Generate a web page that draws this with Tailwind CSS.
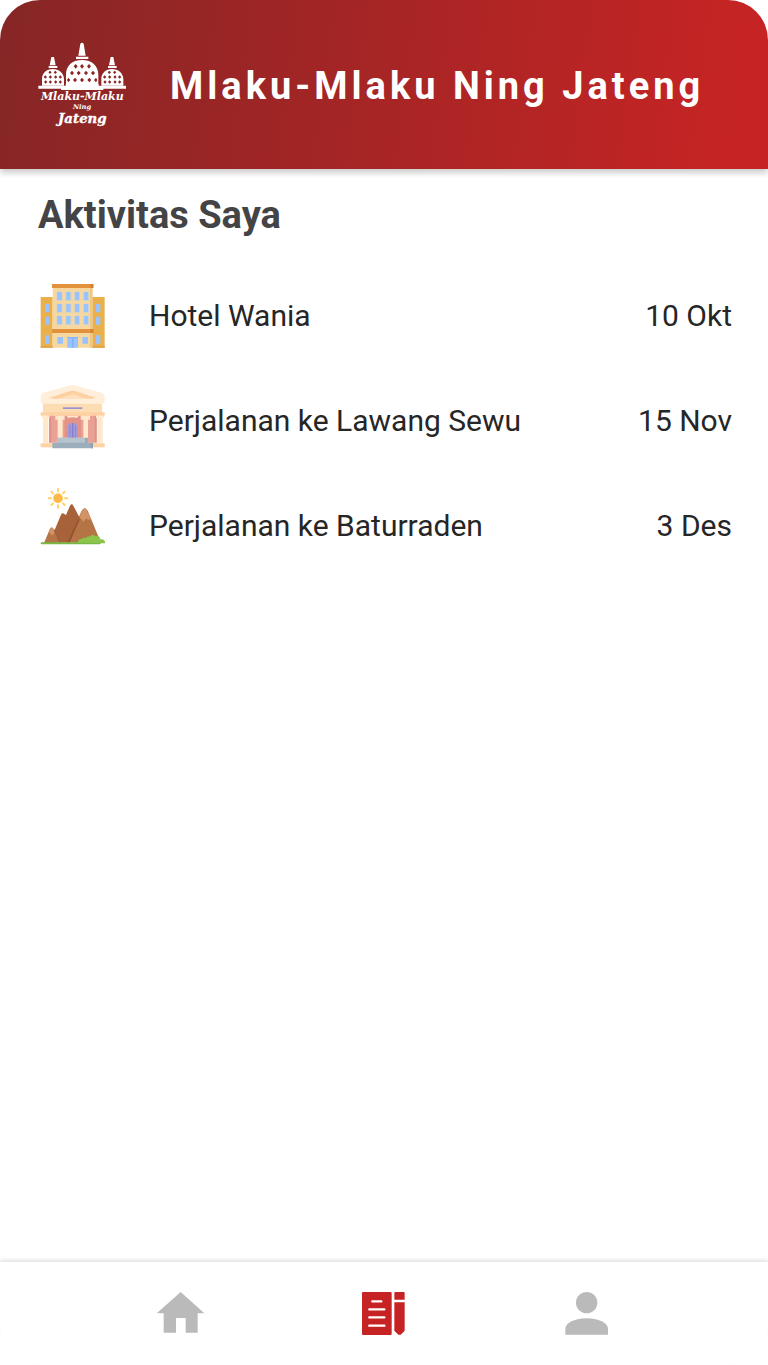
<!DOCTYPE html>
<html lang="id">
<head>
<meta charset="utf-8">
<meta name="viewport" content="width=device-width, initial-scale=1">
<title>Mlaku-Mlaku Ning Jateng</title>
<script src="https://cdn.jsdelivr.net/npm/@tailwindcss/browser@4"></script>
</head>
<body class="bg-white font-[Roboto,sans-serif] text-[#262626]">
<div class="flex min-h-screen flex-col overflow-hidden rounded-[40px] bg-white">
  <header class="flex h-[169px] shrink-0 items-center gap-[38px] bg-[linear-gradient(98deg,#862626_0%,#c62424_95%)] pl-[34px] shadow-[0_4px_6px_rgba(0,0,0,0.2)]">
    <svg class="h-[100px] w-[98px] shrink-0" viewBox="12 0 294 300" role="img" aria-label="Logo Mlaku-Mlaku Ning Jateng">
      <defs>
        <g id="s">
          <path d="M64 66h8l5 25h-18zM56 93h26v6H56zM36 152v-20c0-18 14-30 32-30s34 12 34 30v20z" fill="#fff"/>
          <path d="M60 107l5 5-5 5-5-5zM76 107l5 5-5 5-5-5zM46 121l5 5-5 5-5-5zM61 121l5 5-5 5-5-5zM77 121l5 5-5 5-5-5zM91 121l5 5-5 5-5-5zM47 136l5 5-5 5-5-5zM61 136l5 5-5 5-5-5zM77 136l5 5-5 5-5-5zM91 136l5 5-5 5-5-5z" fill="#8c2626"/>
        </g>
      </defs>
      <use href="#s"/><use href="#s" x="178"/>
      <path d="M151 26q5-6 10 0l6 36h-22zM138 65h37v7h-37zM108 154v-35c0-26 18-44 48-44s49 18 49 44v35z" fill="#fff"/>
      <path d="M25 152h82v-4h99v4h82v9h-68v4H93v-4H25z" fill="#fff"/>
      <g fill="#8c2626">
        <path d="M137 87l6 7-6 7-6-7zM156 87l6 7-6 7-6-7zM177 87l6 7-6 7-6-7z"/>
        <path d="M126 107l6 7-6 7-6-7zM146 107l6 7-6 7-6-7zM168 107l6 7-6 7-6-7zM189 107l6 7-6 7-6-7z"/>
        <path d="M115 128l6 7-6 7-4-7zM135 128l6 7-6 7-6-7zM156 128l6 7-6 7-6-7zM178 128l6 7-6 7-6-7zM198 128l4 7-4 7-6-7z"/>
      </g>
      <g fill="#fff" text-anchor="middle" font-family="'DejaVu Serif', serif" font-style="italic" font-weight="bold">
        <text x="157" y="194" font-size="33">Mlaku-Mlaku</text>
        <text x="156" y="222" font-size="20">Ning</text>
        <text x="157" y="264" font-size="40" stroke="#fff" stroke-width="1">Jateng</text>
      </g>
    </svg>
    <h1 class="whitespace-nowrap pt-[2px] text-[38px] leading-[48px] font-bold tracking-[4px] text-white">Mlaku-Mlaku Ning Jateng</h1>
  </header>

  <main class="flex-1 px-[38px] pt-[22px]">
    <h2 class="text-[38px] leading-[48px] font-bold text-[#444446]">Aktivitas Saya</h2>
    <ul class="mt-6 pl-[2px] text-[30px] leading-10">
      <li class="flex h-[105px] items-center gap-[43px]">
        <svg class="h-[66px] w-[66px] shrink-0" viewBox="30 24 198 198" aria-hidden="true">
          <path fill="#e9b04c" d="M32 66h36v152H32zM187 66h37v152h-37z"/>
          <path fill="#f6d7a0" d="M68 38h114v180H68z"/>
          <path fill="#f0c77d" d="M180 38h8v180h-8z"/>
          <path fill="#e2913d" d="M66 27h124v12H66zM66 162h124v12H66z"/>
          <path fill="#d67f32" d="M182 27h8v12h-8zM182 162h8v12h-8z"/>
          <path fill="#c8d3d2" d="M80 50h17v27H80zM107 50h17v27h-17zM133 50h17v27h-17zM160 50h17v27h-17zM80 86h17v27H80zM107 86h17v27h-17zM133 86h17v27h-17zM160 86h17v27h-17zM80 122h17v28H80zM107 122h17v28h-17zM133 122h17v28h-17zM160 122h17v28h-17z"/>
          <path fill="#98c3ff" d="M82 51h13v24H82zM109 51h12v24h-12zM135 51h12v24h-12zM162 51h12v24h-12zM82 87h13v24H82zM109 87h12v24h-12zM135 87h12v24h-12zM162 87h12v24h-12zM82 123h13v24H82zM109 123h12v24h-12zM135 123h12v24h-12zM162 123h12v24h-12zM45 87h12v25H45zM45 125h12v24H45zM45 181h12v25H45zM198 87h13v25h-13zM198 125h13v24h-13zM198 181h13v25h-13zM82 186h17v20H82zM157 186h17v20h-17zM112 186h32v32h-32z"/>
          <path fill="#83b3f8" d="M126 189h5v29h-5zM112 186h32v3h-32z"/>
          <path fill="#e2a24a" d="M32 213h36v5H32zM187 213h37v5h-37z"/>
        </svg>
        <span class="flex-1">Hotel Wania</span><time datetime="10-10" class="-mr-[2px]">10 Okt</time>
      </li>
      <li class="flex h-[105px] items-center gap-[43px]">
        <svg class="h-[78px] w-[66px] shrink-0" viewBox="30 19 198 234" aria-hidden="true">
          <path fill="#fcdcb2" d="M39 80h177v32H39z"/>
          <path fill="#ffefda" d="M32 62q0-8 9-11l73-20q14-5 28 0l73 20q9 3 9 11v16q0 6-6 6H38q-6 0-6-6z"/>
          <path fill="#fdd0a0" d="M58 66l63-20q7-2 14 0l62 20q-10 4-20 3H76q-10 0-18-3z"/>
          <path fill="#fff0dd" d="M84 69l44-14 44 14z" opacity=".5"/>
          <path fill="#9a92d2" d="M99 95h58v5H99z"/>
          <path fill="#eaa195" d="M57 119h143v82H57z"/>
          <path fill="#e39288" d="M57 119h7v82h-7zM103 119h50v65h-50zM194 119h6v82h-6z"/>
          <path fill="#ffd0a2" d="M32 110h192v10H32zM32 203h37v12H32zM187 203h37v12h-37z"/>
          <path fill="#ffe8cb" d="M36 120h23v7h-4v76H39v-76h-3zM76 120h28v12h-6v71H83v-71h-7zM152 120h28v12h-6v71h-14v-71h-8zM198 120h23v7h-3v76h-16v-76h-4z"/>
          <path fill="#ffe8cb" d="M104 120h48q-9 0-11 7-13-4-26 0-3-7-11-7z"/>
          <path fill="#a39ada" d="M112 186v-30q0-14 16-14t16 14v30z"/>
          <path fill="#877dca" d="M126 142h4v44h-4zM119 148h2v38h-2zM135 148h2v38h-2z"/>
          <path fill="#b5c3ce" d="M82 186h91v16H82z"/>
          <path fill="#9caebc" d="M67 201h122v17H67z"/>
          <path fill="#8fa2b2" d="M166 187h7v14h-7zM182 201h7v17h-7z"/>
        </svg>
        <span class="flex-1">Perjalanan ke Lawang Sewu</span><time datetime="11-15" class="-mr-[2px]">15 Nov</time>
      </li>
      <li class="flex h-[105px] items-center gap-[43px]">
        <svg class="h-[78px] w-[66px] shrink-0" viewBox="30 20 198 234" aria-hidden="true">
          <circle cx="84" cy="54" r="15" fill="#ffcb5c"/>
          <circle cx="84" cy="54" r="12" fill="#fdb84b"/>
          <path stroke="#ffd166" stroke-width="6" stroke-linecap="round" d="M84 26v7M84 75v7M56 54h7M105 54h7M64 34l5 5M99 69l5 5M64 74l5-5M99 39l5-5"/>
          <path fill="#b57445" d="M112 187l43-96q9-15 18 0l40 96z"/>
          <path fill="#d29466" d="M147 112l12-24q5-8 10 0l14 28-8 3-6-5-9 11-6-10z"/>
          <path fill="#a7623a" d="M70 187l-6-14 29-70q5-8 11-1l4 2 12-28q5-8 10 0l21 40-34 71z"/>
          <path fill="#96532f" d="M72 145l18 42h-8l-14-33zM142 121l7-6-30 72h-7z"/>
          <path fill="#b57445" d="M42 188l18-43q5-7 10 0l19 43z"/>
          <path fill="#d29466" d="M57 151l5-8q4-4 8 2l4 17-5-1-4 5-7-10z"/>
          <path fill="#8bc34b" d="M144 188q-2-11 11-12 4-6 13-3 4-7 11-4 8-10 18-1 11-4 14 9 14-1 14 10v2z"/>
          <rect x="32" y="186" width="180" height="6" rx="3" fill="#79b643"/>
          <path fill="#8bc34b" d="M146 182h70q8-1 9 6h-79z"/>
        </svg>
        <span class="flex-1">Perjalanan ke Baturraden</span><time datetime="12-03" class="-mr-[2px]">3 Des</time>
      </li>
    </ul>
  </main>

  <nav class="flex h-[103px] shrink-0 items-center justify-center gap-[155px] bg-white shadow-[0_-2px_4px_rgba(0,0,0,0.12)]" aria-label="Navigasi utama">
    <a href="#beranda" aria-label="Beranda">
      <svg class="h-11 w-12" viewBox="50 52 144 132" fill="#bababa"><path d="M121 52l71 64h-20v58h-36v-44h-29v44H70v-58H49z"/></svg>
    </a>
    <a href="#aktivitas" aria-label="Aktivitas" aria-current="page">
      <svg class="h-11 w-12" viewBox="47 52 144 132"><path fill="#c62424" d="M56 52h83q3 0 3 3v123q0 3-3 3H56q-3 0-3-3V55q0-3 3-3zM153 52h25q3 0 3 3v20h-31V55q0-3 3-3zM150 83h31v85l-12 12h-7l-12-12z"/><path stroke="#fff" stroke-width="7" stroke-linecap="round" d="M84 80h27M75 104h45M75 128h45M75 153h45"/></svg>
    </a>
    <a href="#profil" aria-label="Profil">
      <svg class="h-11 w-12" viewBox="39 52 144 132" fill="#bababa"><circle cx="110" cy="84" r="32"/><path d="M46 180v-18c0-17 30-31 64-31s64 14 64 31v18z"/></svg>
    </a>
  </nav>
</div>
</body>
</html>
